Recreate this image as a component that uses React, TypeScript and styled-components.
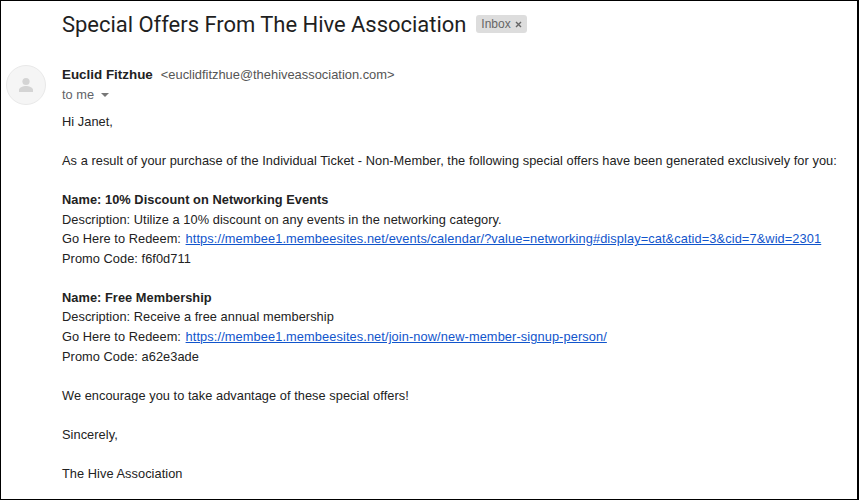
import styled, { createGlobalStyle } from "styled-components";

const GlobalStyle = createGlobalStyle`
  html, body {
    margin: 0;
    padding: 0;
    background: #fff;
  }
`;

const Frame = styled.div`
  box-sizing: border-box;
  width: 859px;
  height: 500px;
  overflow: hidden;
  border: 1px solid #000;
  border-right-width: 2px;
  background: #fff;
  font-family: "Liberation Sans", Arial, sans-serif;
  color: #222;
`;

const SubjectRow = styled.div`
  display: flex;
  align-items: center;
  height: 46px;
  padding-left: 61px;
`;

const Subject = styled.h2`
  margin: 0;
  font-family: Roboto, sans-serif;
  font-size: 22px;
  font-weight: 400;
  letter-spacing: -0.03px;
  color: #1f1f1f;
`;

const Label = styled.span`
  display: inline-flex;
  align-items: center;
  gap: 4px;
  height: 18px;
  margin-left: 10px;
  padding: 0 5px;
  border-radius: 3px;
  background: #dddddd;
  font-size: 12px;
  color: #666;
`;

const SenderRow = styled.div`
  display: flex;
  margin-top: 18px;
  padding-left: 5px;
`;

const Avatar = styled.div`
  display: flex;
  align-items: center;
  justify-content: center;
  width: 40px;
  height: 40px;
  border-radius: 50%;
  background: #f5f5f5;
  border: 1px solid #e9e9e9;
  box-sizing: border-box;
`;

const SenderInfo = styled.div`
  margin-left: 16px;
`;

const SenderLine = styled.div`
  display: flex;
  align-items: baseline;
  height: 20px;
  line-height: 20px;
`;

const SenderName = styled.span`
  font-size: 13.4px;
  font-weight: 700;
  color: #222;
`;

const SenderEmail = styled.span`
  margin-left: 8px;
  font-size: 12.9px;
  color: #555;
`;

const Recipient = styled.div`
  display: flex;
  align-items: center;
  gap: 7px;
  height: 17px;
  padding-top: 1px;
  font-size: 12.8px;
  color: #5f6368;
`;

const Caret = styled.span`
  width: 0;
  height: 0;
  border-left: 4px solid transparent;
  border-right: 4px solid transparent;
  border-top: 4px solid #777;
`;

const Body = styled.div`
  margin-top: 7px;
  padding-left: 61px;
  font-size: 12.8px;
  line-height: 19.55px;
  letter-spacing: 0.05px;
  white-space: nowrap;
  color: #222;
`;

const Block = styled.p`
  margin: 0 0 19.55px;
`;

const OfferName = styled.strong`
  font-weight: 700;
`;

const Link = styled.a`
  margin-left: 1px;
  letter-spacing: 0.1px;
  color: #1155cc;
  text-decoration: underline;
`;

type Offer = {
  name: string;
  description: string;
  url: string;
  code: string;
};

const offers: Offer[] = [
  {
    name: "10% Discount on Networking Events",
    description: "Utilize a 10% discount on any events in the networking category.",
    url: "https://membee1.membeesites.net/events/calendar/?value=networking#display=cat&catid=3&cid=7&wid=2301",
    code: "f6f0d711",
  },
  {
    name: "Free Membership",
    description: "Receive a free annual membership",
    url: "https://membee1.membeesites.net/join-now/new-member-signup-person/",
    code: "a62e3ade",
  },
];

export default function App() {
  return (
    <Frame>
      <GlobalStyle />
      <SubjectRow>
        <Subject>Special Offers From The Hive Association</Subject>
        <Label>
          Inbox
          <svg width="7" height="7" viewBox="0 0 7 7">
            <path d="M1 1l5 5M6 1l-5 5" stroke="#666" strokeWidth="1.4" />
          </svg>
        </Label>
      </SubjectRow>
      <SenderRow>
        <Avatar>
          <svg width="20" height="20" viewBox="0 0 20 20">
            <circle cx="10" cy="6.5" r="3.6" fill="#d4d4d4" />
            <path d="M3 17v-2c0-2.6 4.6-4 7-4s7 1.4 7 4v2z" fill="#d4d4d4" />
          </svg>
        </Avatar>
        <SenderInfo>
          <SenderLine>
            <SenderName>Euclid Fitzhue</SenderName>
            <SenderEmail>&lt;euclidfitzhue@thehiveassociation.com&gt;</SenderEmail>
          </SenderLine>
          <Recipient>
            to me
            <Caret />
          </Recipient>
        </SenderInfo>
      </SenderRow>
      <Body>
        <Block>Hi Janet,</Block>
        <Block>
          As a result of your purchase of the Individual Ticket - Non-Member, the following special
          offers have been generated exclusively for you:
        </Block>
        {offers.map((offer) => (
          <Block key={offer.code}>
            <OfferName>Name: {offer.name}</OfferName>
            <br />
            Description: {offer.description}
            <br />
            Go Here to Redeem: <Link href={offer.url}>{offer.url}</Link>
            <br />
            Promo Code: {offer.code}
          </Block>
        ))}
        <Block>We encourage you to take advantage of these special offers!</Block>
        <Block>Sincerely,</Block>
        <Block>The Hive Association</Block>
      </Body>
    </Frame>
  );
}
